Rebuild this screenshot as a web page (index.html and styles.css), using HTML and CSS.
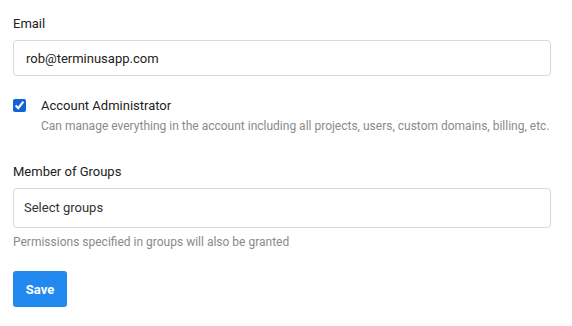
FILE: index.html
```html
<!DOCTYPE html>
<html>
<head>
	<meta charset="utf-8">
	<title>Edit member</title>
	<link rel="stylesheet" href="styles.css">
</head>
<body>
	<form class="member-form">
		<div class="field">
			<label class="field-label" for="email">Email</label>
			<input class="text-input" id="email" type="text" value="rob@terminusapp.com">
		</div>
		<div class="check-row">
			<input class="check-box" id="admin" type="checkbox" checked>
			<div class="check-text">
				<label class="check-label" for="admin">Account Administrator</label>
				<p class="hint hint-admin">Can manage everything in the account including all projects, users, custom domains, billing, etc.</p>
			</div>
		</div>
		<div class="field field-groups">
			<label class="field-label" for="groups">Member of Groups</label>
			<div class="select-input" id="groups">Select groups</div>
			<p class="hint hint-groups">Permissions specified in groups will also be granted</p>
		</div>
		<button class="save-btn" type="button">Save</button>
	</form>
</body>
</html>
```

FILE: styles.css
```css
*{box-sizing: border-box;}
body{margin: 0;padding: 14px 13px;background: #ffffff;font-family: Roboto, "Liberation Sans", sans-serif;color: #222222;}
.member-form{width: 538px;}
.field-label{display: block;font-size: 13px;line-height: 20px;margin-bottom: 6px;color: #222222;}
.text-input{display: block;width: 100%;height: 36px;border: 1px solid #d9d9d9;border-radius: 4px;padding: 0 12px;font-family: inherit;font-size: 13px;color: #222222;outline: none;}
.check-row{display: flex;align-items: flex-start;margin-top: 20px;}
.check-box{width: 13px;height: 13px;margin: 3px 15px 0 0;accent-color: #1262d9;flex: none;}
.check-label{display: block;font-size: 13px;line-height: 20px;}
.hint{margin: 0;font-size: 12px;line-height: 18px;color: #8a8a8a;}
.hint-admin{margin-top: 1px;}
.field-groups{margin-top: 27px;}
.select-input{height: 40px;border: 1px solid #d9d9d9;border-radius: 4px;padding: 0 10px;font-size: 13px;line-height: 38px;color: #333333;}
.hint-groups{margin-top: 5px;}
.save-btn{display: block;margin-top: 20px;width: 54px;height: 36px;border: none;border-radius: 3px;background: #2189ef;color: #ffffff;font-family: inherit;font-size: 13px;font-weight: bold;}
```
